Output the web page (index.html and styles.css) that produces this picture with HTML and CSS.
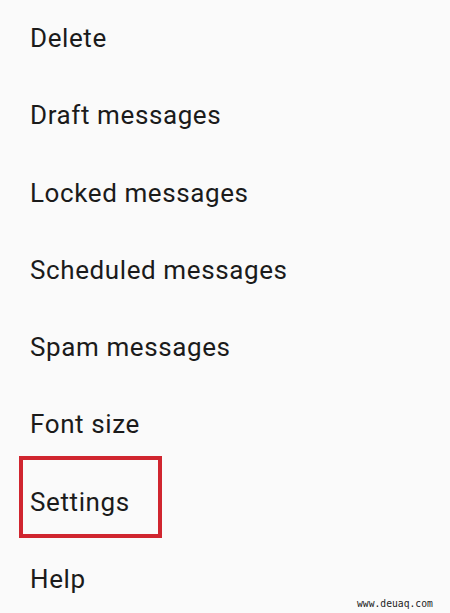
FILE: index.html
```html
<!DOCTYPE html>
<html lang="en">
<head>
<meta charset="utf-8">
<title>Menu</title>
<link rel="stylesheet" href="styles.css">
</head>
<body>
<ul class="menu">
  <li class="item">Delete</li>
  <li class="item">Draft messages</li>
  <li class="item">Locked messages</li>
  <li class="item">Scheduled messages</li>
  <li class="item">Spam messages</li>
  <li class="item">Font size</li>
  <li class="item item-marked">Settings</li>
  <li class="item">Help</li>
</ul>
<div class="watermark">www.deuaq.com</div>
</body>
</html>
```
FILE: styles.css
```css
html, body {
  margin: 0;
  padding: 0;
  background: #fafafa;
}
body {
  width: 450px;
  height: 613px;
  position: relative;
  overflow: hidden;
  font-family: Roboto, "Noto Sans", sans-serif;
  color: #1b1b1b;
}
.menu {
  list-style: none;
  margin: 0;
  padding: 0 0 0 30px;
  display: flex;
  flex-direction: column;
}
.item {
  height: 77.3px;
  line-height: 77.3px;
  font-size: 26px;
  letter-spacing: 0.6px;
  white-space: nowrap;
  position: relative;
}
.item-marked::after {
  content: "";
  position: absolute;
  left: -11px;
  top: -8px;
  width: 143px;
  height: 82px;
  border: 4px solid #d0252f;
  box-sizing: border-box;
}
.watermark {
  position: absolute;
  left: 357px;
  top: 598px;
  font-family: "DejaVu Sans Mono", monospace;
  font-size: 9.7px;
  line-height: 12px;
  color: #222;
}
```
